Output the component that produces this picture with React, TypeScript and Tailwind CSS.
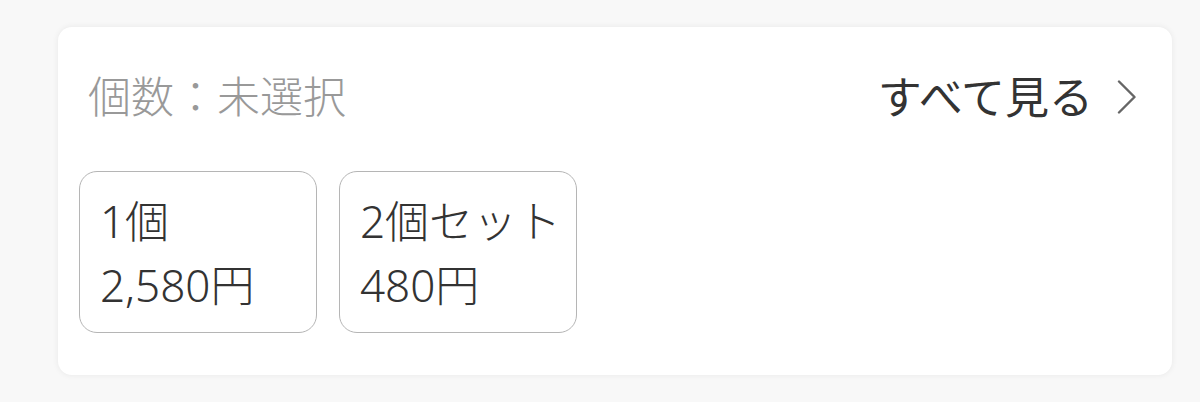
import React from 'react'

const options = [
  { label: '1個', price: '2,580円' },
  { label: '2個セット', price: '480円' },
]

function ChevronRight() {
  return (
    <svg width="20" height="34" viewBox="0 0 20 34" fill="none" className="shrink-0">
      <polyline points="2,1.5 17.5,17 2,32.5" stroke="#666" strokeWidth="2.4" strokeLinecap="round" strokeLinejoin="round" />
    </svg>
  )
}

export default function App() {
  return (
    <div
      className="min-h-[402px] w-[1200px] bg-[#f8f8f8] pt-[27px] pl-[58px] pr-[28px]"
      style={{ fontFamily: '"Noto Sans", "Noto Sans CJK JP", sans-serif' }}
    >
      <div className="rounded-[14px] bg-white pb-[42px] shadow-[0_0_6px_rgba(0,0,0,0.07)]">
        {/* Header */}
        <div className="flex items-center justify-between pt-[37px] pl-[30px] pr-[35px]">
          <span className="text-[43px] font-light leading-[66px] text-[#999]">個数：未選択</span>
          <button className="flex items-center gap-[24px] text-[#333]">
            <span className="text-[44px] font-normal leading-[66px]">すべて見る</span>
            <ChevronRight />
          </button>
        </div>

        {/* Options */}
        <div className="mt-[41px] flex gap-[22px] pl-[21px]">
          {options.map((o) => (
            <button
              key={o.label}
              className="flex h-[162px] w-[238px] flex-col items-start rounded-[18px] border-[1.5px] border-[#b5b5b5] pt-[17px] pl-[20px] text-left font-light text-[#333]"
            >
              <span className="text-[44px] leading-[64px]">{o.label}</span>
              <span className="text-[44px] leading-[64px]">{o.price}</span>
            </button>
          ))}
        </div>
      </div>
    </div>
  )
}
